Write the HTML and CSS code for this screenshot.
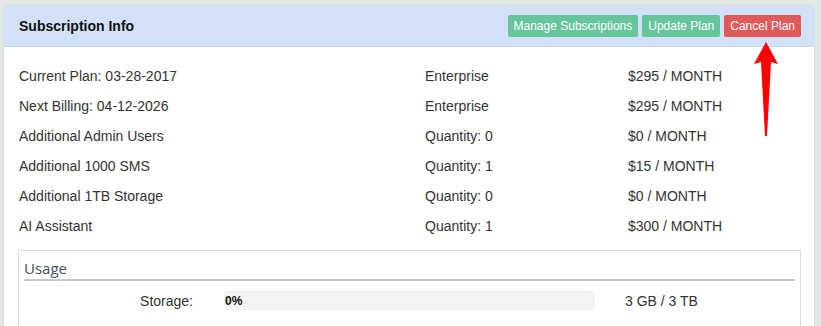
FILE: index.html
```html
<!DOCTYPE html>
<html>
<head>
<meta charset="utf-8">
<link rel="stylesheet" href="styles.css">
</head>
<body>
<div class="panel">
  <div class="panel-head">
    <div class="title">Subscription Info</div>
    <div class="actions">
      <button class="btn btn-green">Manage Subscriptions</button>
      <button class="btn btn-green">Update Plan</button>
      <button class="btn btn-red">Cancel Plan</button>
    </div>
  </div>
  <div class="panel-body">
    <div class="rows">
      <div class="row"><span>Current Plan: 03-28-2017</span><span>Enterprise</span><span>$295 / MONTH</span></div>
      <div class="row"><span>Next Billing: 04-12-2026</span><span>Enterprise</span><span>$295 / MONTH</span></div>
      <div class="row"><span>Additional Admin Users</span><span>Quantity: 0</span><span>$0 / MONTH</span></div>
      <div class="row"><span>Additional 1000 SMS</span><span>Quantity: 1</span><span>$15 / MONTH</span></div>
      <div class="row"><span>Additional 1TB Storage</span><span>Quantity: 0</span><span>$0 / MONTH</span></div>
      <div class="row"><span>AI Assistant</span><span>Quantity: 1</span><span>$300 / MONTH</span></div>
    </div>
    <div class="usage">
      <div class="legend">Usage</div>
      <div class="usage-row">
        <div class="usage-label">Storage:</div>
        <div class="bar"><span class="bar-text">0%</span></div>
        <div class="usage-value">3 GB / 3 TB</div>
      </div>
    </div>
  </div>
</div>
<svg class="arrow" width="30" height="100" viewBox="0 0 30 100">
  <path d="M15 0 L27 22 L20 20 L16 94 L14 94 L10 20 L3 22 Z" fill="#ff0000"/>
</svg>
</body>
</html>
```
FILE: styles.css
```css
html, body {
  margin: 0;
  padding: 0;
}
body {
  background: #e3e8e5;
  font-family: "Liberation Sans", Arial, sans-serif;
  color: #333;
  height: 326px;
  overflow: hidden;
  position: relative;
}
.panel {
  margin: 4px 6px 0 3px;
  background: #fff;
  border: 1px solid #d6dde0;
  border-bottom: none;
  border-radius: 4px 4px 0 0;
  height: 321px;
  overflow: hidden;
}
.panel-head {
  background: #d2e1f7;
  height: 40px;
  display: flex;
  align-items: center;
  justify-content: space-between;
  padding: 1px 13px 0 15px;
  border-bottom: 1px solid #c9d6e8;
  border-radius: 3px 3px 0 0;
}
.title {
  font-weight: bold;
  font-size: 14px;
  color: #111;
}
.actions {
  display: flex;
  gap: 4px;
}
.btn {
  font-family: "Liberation Sans", Arial, sans-serif;
  font-size: 12px;
  color: #fff;
  border: none;
  border-radius: 2px;
  height: 22px;
  padding: 0 6px;
  margin: 0;
}
.btn-green { background: #66c59b; }
.btn-red { background: #e05a5a; }
.panel-body {
  padding: 14px 13px 0 15px;
}
.row {
  display: grid;
  grid-template-columns: 406px 203px 1fr;
  height: 30px;
  line-height: 30px;
  font-size: 14px;
}
.usage {
  margin-top: 9px;
  margin-left: -1px;
  border: 1px solid #dcdcdc;
  border-bottom: none;
  padding: 7px 5px 0 5px;
  height: 77px;
}
.legend {
  font-family: "Open Sans", sans-serif;
  font-size: 15px;
  color: #44515e;
  line-height: 20px;
  border-bottom: 2px solid #c9c9c9;
  padding-bottom: 1px;
}
.usage-row {
  display: flex;
  align-items: center;
  margin-top: 10px;
  font-size: 14px;
}
.usage-label {
  width: 169px;
  text-align: right;
  margin-right: 31px;
}
.bar {
  width: 371px;
  height: 19px;
  background: #f3f3f3;
  border-radius: 4px;
  box-shadow: inset 0 1px 1px rgba(0,0,0,0.03);
  display: flex;
  align-items: center;
  margin-right: 30px;
}
.bar-text {
  font-weight: bold;
  font-size: 12px;
  color: #111;
  padding-left: 1px;
}
.arrow {
  position: absolute;
  left: 751px;
  top: 42px;
}
```
